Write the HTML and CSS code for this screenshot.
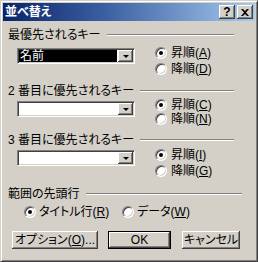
FILE: index.html
```html
<!DOCTYPE html>
<html lang="ja">
<head>
  <meta charset="UTF-8">
  <title>並べ替え</title>
  <link rel="stylesheet" href="styles.css">
</head>
<body>

<div class="window">
  <div class="titlebar">
    <span class="title">並べ替え</span>
    <span class="title-btn help">?</span>
    <span class="title-btn close">
      <svg width="8" height="7" viewBox="0 0 8 7"><path d="M0 0h2l2 2 2-2h2L5 3.5 8 7H6L4 5 2 7H0l3-3.5z" fill="#000"/></svg>
    </span>
  </div>

  <div class="content">
    <div class="group g1">
      <div class="group-head">最優先されるキー</div>
      <div class="group-row">
        <div class="combo">
          <span class="combo-field"><span class="combo-sel">名前</span></span>
          <span class="combo-btn"><i class="arrow"></i></span>
        </div>
        <div class="radios">
          <div class="radio checked"><span class="dot"></span><span>昇順(<u>A</u>)</span></div>
          <div class="radio"><span class="dot"></span><span>降順(<u>D</u>)</span></div>
        </div>
      </div>
    </div>

    <div class="group g2">
      <div class="group-head">2 番目に優先されるキー</div>
      <div class="group-row">
        <div class="combo">
          <span class="combo-field"></span>
          <span class="combo-btn"><i class="arrow"></i></span>
        </div>
        <div class="radios tight">
          <div class="radio checked"><span class="dot"></span><span>昇順(<u>C</u>)</span></div>
          <div class="radio"><span class="dot"></span><span>降順(<u>N</u>)</span></div>
        </div>
      </div>
    </div>

    <div class="group g3">
      <div class="group-head">3 番目に優先されるキー</div>
      <div class="group-row">
        <div class="combo">
          <span class="combo-field"></span>
          <span class="combo-btn"><i class="arrow"></i></span>
        </div>
        <div class="radios">
          <div class="radio checked"><span class="dot"></span><span>昇順(<u>I</u>)</span></div>
          <div class="radio"><span class="dot"></span><span>降順(<u>G</u>)</span></div>
        </div>
      </div>
    </div>

    <div class="group g4">
      <div class="group-head">範囲の先頭行</div>
      <div class="header-row">
        <div class="radio checked first"><span class="dot"></span><span>タイトル行(<u>R</u>)</span></div>
        <div class="radio"><span class="dot"></span><span>データ(<u>W</u>)</span></div>
      </div>
    </div>

    <div class="buttons">
      <button class="btn options">オプション(<u>O</u>)...</button>
      <button class="btn ok">OK</button>
      <button class="btn cancel">キャンセル</button>
    </div>
  </div>
</div>

</body>
</html>
```

FILE: styles.css
```css
* {
  margin: 0;
  padding: 0;
  box-sizing: border-box;
}

body {
  background: #D4D0C8;
  font-family: 'Liberation Sans', 'Noto Sans CJK JP', sans-serif;
  font-size: 12px;
  font-feature-settings: 'palt';
  color: #000;
}

.window {
  width: 258px;
  height: 262px;
  background: #D4D0C8;
  border: 1px solid;
  border-color: #D4D0C8 #404040 #404040 #D4D0C8;
  box-shadow: inset 1px 1px #FFFFFF, inset -1px -1px #808080;
  padding: 2px;
  display: flex;
  flex-direction: column;
}

.titlebar {
  height: 18px;
  background: linear-gradient(90deg, #0A246A 0%, #3A5FA0 40%, #A6CAF0 100%);
  display: flex;
  align-items: center;
  gap: 2px;
  padding: 0 2px;
}

.title {
  flex: 1;
  color: #FFFFFF;
  font-weight: bold;
  line-height: 14px;
}

.title-btn {
  width: 16px;
  height: 14px;
  background: #D4D0C8;
  box-shadow: inset -1px -1px #404040, inset 1px 1px #FFFFFF, inset -2px -2px #808080, inset 2px 2px #D4D0C8;
  display: flex;
  align-items: center;
  justify-content: center;
  font-weight: bold;
  font-size: 12px;
  line-height: 12px;
}

.content {
  display: flex;
  flex-direction: column;
  padding-left: 5px;
}

.group-head {
  display: flex;
  align-items: center;
  height: 14px;
  line-height: 14px;
  margin-right: 21px;
  white-space: nowrap;
}

.group-head::after {
  content: "";
  flex: 1;
  margin-left: 6px;
  border-top: 1px solid #808080;
  border-bottom: 1px solid #FFFFFF;
}

.g1 { margin-top: 7px; }
.g1 .group-row { margin-top: 3px; }
.g2 { margin-top: 7px; }
.g3 { margin-top: 7px; }
.g4 { margin-top: 8px; }
.g4 .group-head { margin-right: 13px; }

.group-row {
  display: flex;
  align-items: flex-start;
}

.combo {
  width: 118px;
  height: 16px;
  margin: 3px 0 0 9px;
  background: #FFFFFF;
  border: 1px solid;
  border-color: #808080 #FFFFFF #FFFFFF #808080;
  box-shadow: inset 1px 1px #404040, inset -1px -1px #D4D0C8;
  padding: 1px;
  display: flex;
}

.combo-field {
  flex: 1;
  display: flex;
  padding: 0 1px 0 0;
}

.combo-sel {
  flex: 1;
  background: #000;
  color: #FFFFFF;
  line-height: 12px;
  padding-left: 1px;
}

.combo-btn {
  width: 15px;
  background: #D4D0C8;
  box-shadow: inset -1px -1px #404040, inset 1px 1px #FFFFFF, inset -2px -2px #808080;
  display: flex;
  align-items: center;
  justify-content: center;
}

.arrow {
  border-left: 3px solid transparent;
  border-right: 3px solid transparent;
  border-top: 3px solid #000;
}

.radios {
  display: flex;
  flex-direction: column;
  margin-left: 20px;
}

.radio {
  display: flex;
  align-items: center;
  gap: 4px;
  height: 16px;
  line-height: 14px;
  white-space: nowrap;
}

.radios.tight .radio { height: 14px; }

.dot {
  position: relative;
  width: 12px;
  height: 12px;
  flex: none;
  border-radius: 50%;
  background: #FFFFFF;
  border: 1px solid;
  border-color: #808080 #FFFFFF #FFFFFF #808080;
  box-shadow: inset 1px 1px #404040, inset -1px -1px #D4D0C8;
}

.checked .dot::after {
  content: "";
  position: absolute;
  left: 3px;
  top: 3px;
  width: 4px;
  height: 4px;
  border-radius: 50%;
  background: #000;
}

.header-row {
  display: flex;
  margin-top: 3px;
  padding-left: 16px;
}

.header-row .first {
  width: 98px;
}

.header-row .radio { gap: 3px; }

.buttons {
  display: flex;
  margin-top: 11px;
  padding-left: 4px;
}

.btn {
  height: 18px;
  background: #D4D0C8;
  border: none;
  font: inherit;
  color: #000;
  box-shadow: inset -1px -1px #404040, inset 1px 1px #FFFFFF, inset -2px -2px #808080, inset 2px 2px #D4D0C8;
  line-height: 14px;
}

.options { width: 86px; }

.ok {
  width: 63px;
  margin-left: 10px;
  border: 1px solid #000;
}

.cancel {
  width: 58px;
  margin-left: 11px;
}
```
